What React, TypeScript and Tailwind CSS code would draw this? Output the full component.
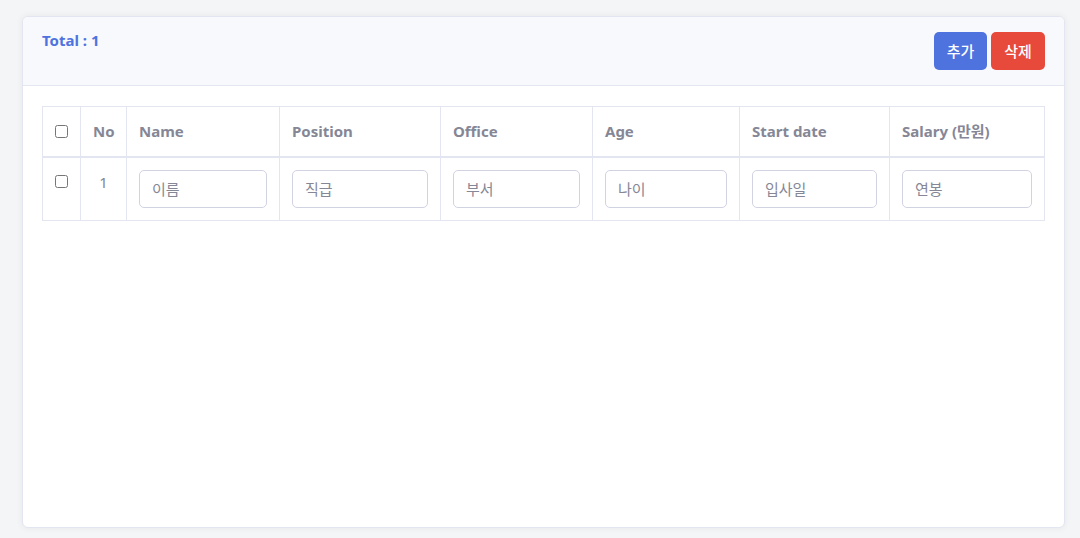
import { useState } from "react";

const columns = [
  { key: "name", label: "Name", placeholder: "이름", width: "w-[153px]" },
  { key: "position", label: "Position", placeholder: "직급", width: "w-[161px]" },
  { key: "office", label: "Office", placeholder: "부서", width: "w-[152px]" },
  { key: "age", label: "Age", placeholder: "나이", width: "w-[147px]" },
  { key: "start", label: "Start date", placeholder: "입사일", width: "w-[150px]" },
  { key: "salary", label: "Salary (만원)", placeholder: "연봉", width: "w-[155px]" },
];

const App = () => {
  const [rows] = useState([{ id: 1 }]);

  return (
    <div
      className="min-h-[538px] bg-[#f4f5f7] pl-[22px] pt-[16px] pb-[10px]"
      style={{ fontFamily: '"Noto Sans", "Noto Sans CJK KR", sans-serif' }}
    >
      <div className="h-[512px] w-[1043px] rounded-[6px] border border-[#e3e6f0] bg-white shadow-[0_0_6px_rgba(58,59,69,0.08)] overflow-hidden">
        {/* header */}
        <div className="flex items-start justify-between border-b border-[#e3e6f0] bg-[#f8f9fc] px-[19px] pt-[15px] pb-[15px]">
          <div className="-mt-[2px] text-[15px] leading-[20px] font-bold text-[#4e73df]">Total : {rows.length}</div>
          <div className="flex gap-[4px]">
            <button className="h-[38px] w-[53px] rounded-[5px] bg-[#4e73df] text-[15px] font-medium text-white">
              추가
            </button>
            <button className="h-[38px] w-[54px] rounded-[5px] bg-[#e74a3b] text-[15px] font-medium text-white">
              삭제
            </button>
          </div>
        </div>

        {/* body */}
        <div className="px-[19px] pt-[20px]">
          <table className="table-fixed border-collapse text-[#858796] w-[1001px]">
            <thead>
              <tr>
                <th className="w-[38px] border border-b-2 border-[#e3e6f0] px-[12px] h-[50px] text-left align-middle">
                  <input type="checkbox" className="block h-[13px] w-[13px]" />
                </th>
                <th className="w-[46px] border border-b-2 border-[#e3e6f0] px-[12px] text-left text-[15px] font-bold">No</th>
                {columns.map((c) => (
                  <th
                    key={c.key}
                    className={`${c.width} border border-b-2 border-[#e3e6f0] px-[12px] text-left text-[15px] font-bold`}
                  >
                    {c.label}
                  </th>
                ))}
              </tr>
            </thead>
            <tbody>
              {rows.map((r) => (
                <tr key={r.id}>
                  <td className="border border-[#e3e6f0] px-[12px] pt-[17px] align-top">
                    <input type="checkbox" className="block h-[13px] w-[13px]" />
                  </td>
                  <td className="border border-[#e3e6f0] px-[12px] pt-[12px] align-top text-center text-[15px] leading-[24px]">
                    {r.id}
                  </td>
                  {columns.map((c) => (
                    <td key={c.key} className="border border-[#e3e6f0] p-[12px] align-top">
                      <input
                        type="text"
                        placeholder={c.placeholder}
                        className="block h-[38px] w-full rounded-[5px] border border-[#d1d3e2] px-[12px] text-[15px] text-[#6e707e] placeholder:text-[#858796] outline-none"
                      />
                    </td>
                  ))}
                </tr>
              ))}
            </tbody>
          </table>
        </div>
      </div>
    </div>
  );
};

export default App;
